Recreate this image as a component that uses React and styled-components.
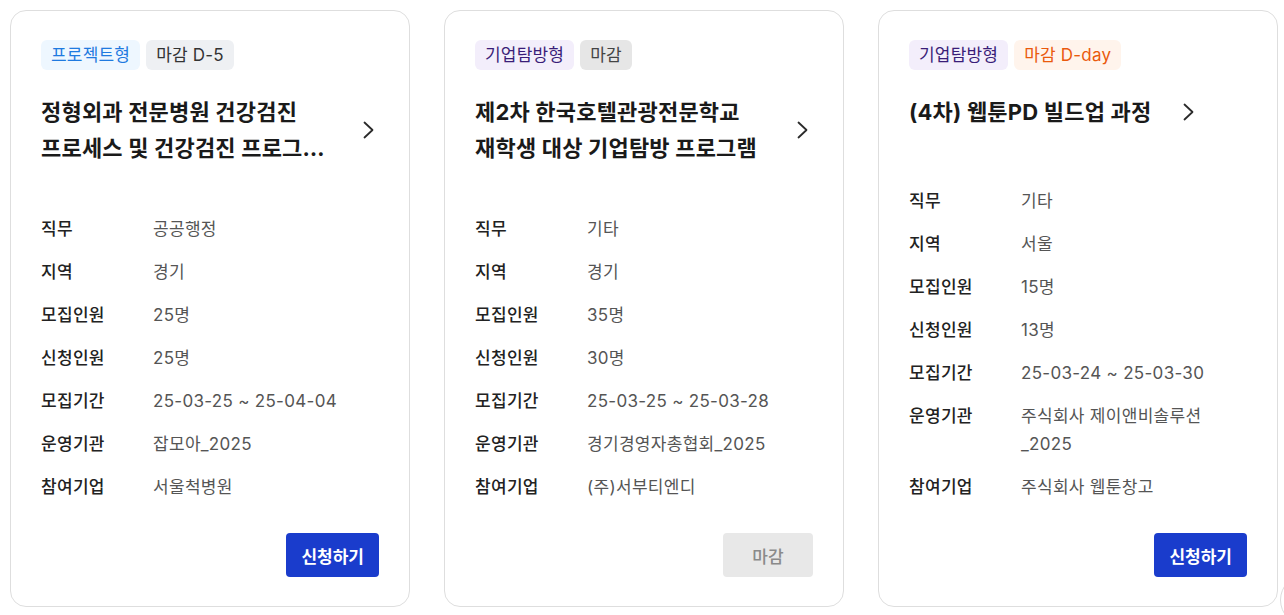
import React from "react";
import styled, { createGlobalStyle } from "styled-components";

const GlobalStyle = createGlobalStyle`
  html, body {
    margin: 0;
    padding: 0;
    background: #ffffff;
  }
  body {
    font-family: Inter, "Noto Sans CJK KR", "Noto Sans", sans-serif;
    color: #222;
    -webkit-font-smoothing: antialiased;
  }
  * { box-sizing: border-box; }
`;

const Page = styled.main`
  display: flex;
  align-items: stretch;
  gap: 34px;
  padding: 10px 0 0 10px;
`;

const Card = styled.article`
  width: 400px;
  display: flex;
  flex-direction: column;
  border: 1px solid #dedede;
  border-radius: 16px;
  padding: 29px 30px;
  background: #fff;
`;

const BadgeRow = styled.div`
  display: flex;
  gap: 6px;
`;

const badgeTones = {
  blue: { bg: "#eef7ff", fg: "#1f7ae0" },
  gray: { bg: "#eef0f3", fg: "#333333" },
  purple: { bg: "#f3eefb", fg: "#3a1d78" },
  closed: { bg: "#e6e6e6", fg: "#444444" },
  orange: { bg: "#fff4ec", fg: "#ea5a0c" },
};

const Badge = styled.span`
  display: inline-flex;
  align-items: center;
  height: 30px;
  padding: 0 10px;
  border-radius: 6px;
  font-size: 17px;
  letter-spacing: 0.2px;
  line-height: 1;
  background: ${(p) => badgeTones[p.$tone].bg};
  color: ${(p) => badgeTones[p.$tone].fg};
`;

const TitleRow = styled.div`
  display: flex;
  align-items: center;
  margin-top: 24px;
  cursor: pointer;
`;

const Title = styled.h3`
  margin: 0;
  max-width: 290px;
  font-size: 22px;
  letter-spacing: 0.2px;
  font-weight: 700;
  line-height: 36px;
  color: #1a1a1a;
  word-break: keep-all;
  display: -webkit-box;
  -webkit-line-clamp: 2;
  -webkit-box-orient: vertical;
  overflow: hidden;
`;

const Chevron = styled.svg`
  flex: none;
  margin-left: 32px;
  width: 12px;
  height: 18px;
`;

const InfoList = styled.dl`
  margin: auto 0 0 0;
  padding-top: 49px;
  display: flex;
  flex-direction: column;
  gap: 15px;
`;

const InfoRow = styled.div`
  display: grid;
  grid-template-columns: 112px 1fr;
  font-size: 17px;
  letter-spacing: 0.3px;
  line-height: 28px;
`;

const Label = styled.dt`
  margin: 0;
  font-weight: 500;
  color: #222;
`;

const Value = styled.dd`
  margin: 0;
  color: #555;
  font-weight: 400;
`;

const Footer = styled.div`
  display: flex;
  justify-content: flex-end;
  margin-top: 32px;
`;

const ActionButton = styled.button`
  min-width: 90px;
  height: 44px;
  padding: 0 15px;
  border: none;
  border-radius: 4px;
  font-family: inherit;
  font-size: 17px;
  background: ${(p) => (p.$closed ? "#e8e8e8" : "#1a3ccc")};
  color: ${(p) => (p.$closed ? "#8a8a8a" : "#ffffff")};
  font-weight: ${(p) => (p.$closed ? 500 : 600)};
  cursor: ${(p) => (p.$closed ? "default" : "pointer")};
`;

const FloatingButton = styled.button`
  position: fixed;
  left: 1280px;
  top: 574px;
  width: 52px;
  height: 52px;
  border-radius: 50%;
  border: 1px solid #dcdcdc;
  background: #fff;
  padding: 0;
`;

const programs = [
  {
    badges: [
      { text: "프로젝트형", tone: "blue" },
      { text: "마감 D-5", tone: "gray" },
    ],
    title: "정형외과 전문병원 건강검진 프로세스 및 건강검진 프로그램 개선 과제",
    info: [
      ["직무", "공공행정"],
      ["지역", "경기"],
      ["모집인원", "25명"],
      ["신청인원", "25명"],
      ["모집기간", "25-03-25 ~ 25-04-04"],
      ["운영기관", "잡모아_2025"],
      ["참여기업", "서울척병원"],
    ],
    closed: false,
  },
  {
    badges: [
      { text: "기업탐방형", tone: "purple" },
      { text: "마감", tone: "closed" },
    ],
    title: "제2차 한국호텔관광전문학교 재학생 대상 기업탐방 프로그램",
    info: [
      ["직무", "기타"],
      ["지역", "경기"],
      ["모집인원", "35명"],
      ["신청인원", "30명"],
      ["모집기간", "25-03-25 ~ 25-03-28"],
      ["운영기관", "경기경영자총협회_2025"],
      ["참여기업", "(주)서부티엔디"],
    ],
    closed: true,
  },
  {
    badges: [
      { text: "기업탐방형", tone: "purple" },
      { text: "마감 D-day", tone: "orange" },
    ],
    title: "(4차) 웹툰PD 빌드업 과정",
    info: [
      ["직무", "기타"],
      ["지역", "서울"],
      ["모집인원", "15명"],
      ["신청인원", "13명"],
      ["모집기간", "25-03-24 ~ 25-03-30"],
      ["운영기관", "주식회사 제이앤비솔루션_2025"],
      ["참여기업", "주식회사 웹툰창고"],
    ],
    closed: false,
  },
];

function ProgramCard({ program }) {
  return (
    <Card>
      <BadgeRow>
        {program.badges.map((b) => (
          <Badge key={b.text} $tone={b.tone}>
            {b.text}
          </Badge>
        ))}
      </BadgeRow>
      <TitleRow>
        <Title>{program.title}</Title>
        <Chevron viewBox="0 0 12 18" fill="none" aria-hidden="true">
          <polyline
            points="1.5,1.5 9.5,9 1.5,16.5"
            stroke="#2a2a2a"
            strokeWidth="1.8"
            strokeLinecap="round"
            strokeLinejoin="round"
          />
        </Chevron>
      </TitleRow>
      <InfoList>
        {program.info.map(([k, v]) => (
          <InfoRow key={k}>
            <Label>{k}</Label>
            <Value>{v}</Value>
          </InfoRow>
        ))}
      </InfoList>
      <Footer>
        <ActionButton $closed={program.closed} disabled={program.closed}>
          {program.closed ? "마감" : "신청하기"}
        </ActionButton>
      </Footer>
    </Card>
  );
}

export default function App() {
  return (
    <>
      <GlobalStyle />
      <Page>
        {programs.map((p) => (
          <ProgramCard key={p.title} program={p} />
        ))}
      </Page>
      <FloatingButton aria-label="위로" />
    </>
  );
}
